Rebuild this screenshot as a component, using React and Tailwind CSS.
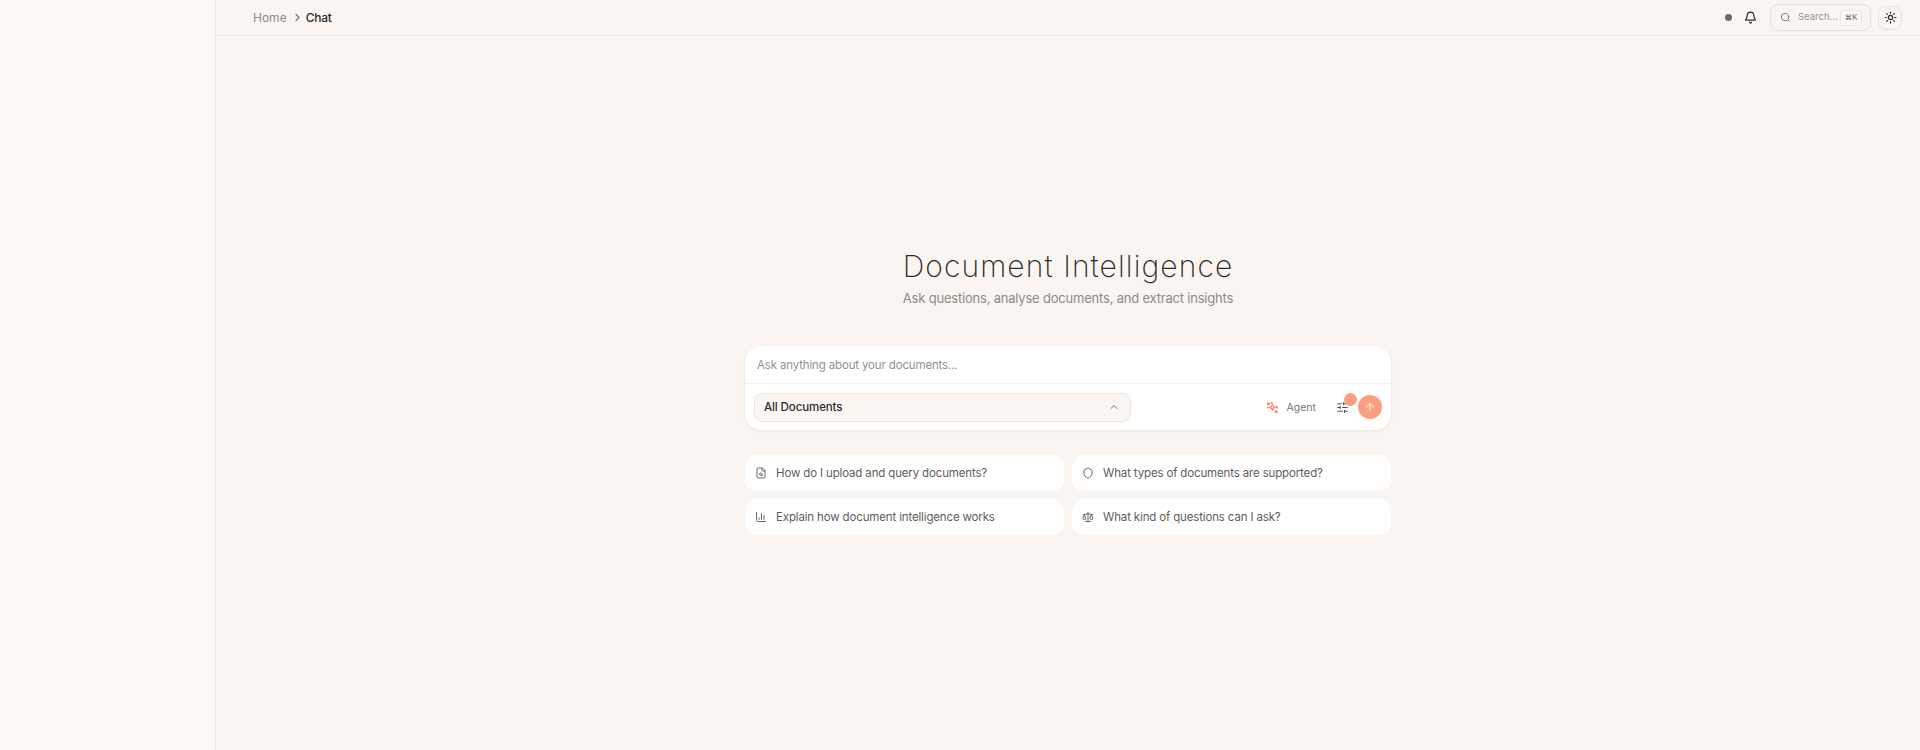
import { ArrowUp, Bell, ChartColumn, ChevronRight, ChevronUp, FileSearch, Scale, Search, Shield, SlidersHorizontal, Sun } from 'lucide-react';

const suggestions = [
  { label: 'How do I upload and query documents?', icon: FileSearch },
  { label: 'What types of documents are supported?', icon: Shield },
  { label: 'Explain how document intelligence works', icon: ChartColumn },
  { label: 'What kind of questions can I ask?', icon: Scale },
];

function AgentIcon() {
  return (
    <svg width="11" height="11" viewBox="0 0 12 12" fill="#f58b68">
      <rect x="0" y="0.5" width="3" height="3" />
      <rect x="0" y="5" width="2" height="2" />
      <rect x="4" y="0" width="2" height="2" />
      <path d="M6 1.5 7.5 4 10 5.5 7.8 7.5 6.5 10 4.5 7.8 2 6.2 4.3 4z" />
      <circle cx="6" cy="5.7" r="1.1" fill="#fff" />
      <rect x="9.5" y="4.5" width="2.5" height="2.5" />
      <rect x="8.5" y="9" width="3" height="3" />
    </svg>
  );
}

export default function App() {
  return (
    <div className="flex h-[750px] w-full overflow-hidden bg-[#faf5f0] font-['Inter',sans-serif] text-[#2b2b2b]">
      {/* Sidebar */}
      <aside className="w-[216px] shrink-0 border-r border-[#e9e4de] bg-[#fcf8f4]" />

      <div className="flex min-w-0 flex-1 flex-col">
        {/* Header */}
        <header className="flex h-[36px] shrink-0 items-center justify-between border-b border-[#e9e4de] pl-[37px] pr-[18px]">
          <nav className="flex items-center text-[12px]">
            <span className="tracking-[0px] text-[#8c8a87]">Home</span>
            <ChevronRight size={13} className="ml-[4px] mr-[2px] text-[#77746f]" />
            <span className="font-medium tracking-[-0.2px] text-[#2b2b2b]">Chat</span>
          </nav>
          <div className="flex items-center">
            <span className="h-[7px] w-[7px] rounded-full bg-[#6b6966]" />
            <Bell size={13} strokeWidth={2.2} className="ml-[12px] text-[#2b2b2b]" />
            <div className="ml-[13px] flex h-[27px] w-[101px] items-center rounded-lg border border-[#e6e1db] pl-[9px] pr-[8px]">
              <Search size={11} className="text-[#77746f]" />
              <span className="ml-[7px] text-[9.5px] text-[#97948f]">Search...</span>
              <span className="ml-auto flex h-[16px] w-[22px] items-center justify-center rounded-[3px] border border-[#e9e4de] bg-[#fbf8f5] text-[7.5px] font-medium text-[#77746f]">⌘K</span>
            </div>
            <button className="ml-[7px] flex h-[24px] w-[24px] items-center justify-center rounded-lg border border-[#e9e4de]">
              <Sun size={13} strokeWidth={2.2} className="text-[#2b2b2b]" />
            </button>
          </div>
        </header>

        {/* Main */}
        <main className="flex flex-1 flex-col items-center pt-[210px]">
          <h1 className="text-[30px] font-extralight leading-[40px] tracking-[1.1px] text-[#2b2b2b]">Document Intelligence</h1>
          <p className="mt-[2px] text-[13px] leading-[20px] tracking-[-0.2px] text-[#8c8a87]">Ask questions, analyse documents, and extract insights</p>

          <div className="mt-[38px] w-[646px]">
            <div className="rounded-2xl bg-white shadow-[0_1px_3px_rgba(90,70,50,0.1)]">
              <div className="flex h-[38px] items-center border-b border-[#f7f3ee] px-[12px] pt-[2px] text-[11.5px] tracking-[-0.15px] text-[#93908c]">
                Ask anything about your documents...
              </div>
              <div className="flex h-[46px] items-center pl-[9px] pr-[9px]">
                <div className="flex h-[29px] w-[377px] items-center justify-between rounded-lg border border-[#ece5dc] bg-[#faf5f0] pl-[9px] pr-[10px]">
                  <span className="pt-px text-[11.5px] font-medium tracking-[-0.1px] text-[#2b2b2b]">All Documents</span>
                  <ChevronUp size={12} className="text-[#77746f]" />
                </div>
                <div className="ml-auto flex items-center">
                  <AgentIcon />
                  <span className="ml-[9px] pt-px text-[10.5px] text-[#77746f]">Agent</span>
                  <div className="relative ml-[20px] mr-[9px]">
                    <SlidersHorizontal size={13} className="text-[#55524e]" />
                    <span className="absolute -top-[8px] left-[8px] h-[13px] w-[13px] rounded-full bg-[#fb9f80]" />
                  </div>
                  <button className="z-10 flex h-[24px] w-[24px] items-center justify-center rounded-full bg-[#fb9f80]">
                    <ArrowUp size={12} className="text-white" />
                  </button>
                </div>
              </div>
            </div>

            {/* Suggestions */}
            <div className="mt-[25px] grid grid-cols-2 gap-[8px]">
              {suggestions.map(({ label, icon: Icon }) => (
                <div key={label} className="flex h-[36px] items-center rounded-xl bg-white pl-[10px] text-[11.5px] tracking-[-0.15px] text-[#5f5c58]">
                  <Icon size={12} className="shrink-0 text-[#6b6966]" />
                  <span className="ml-[9px] pt-px">{label}</span>
                </div>
              ))}
            </div>
          </div>
        </main>
      </div>
    </div>
  );
}
